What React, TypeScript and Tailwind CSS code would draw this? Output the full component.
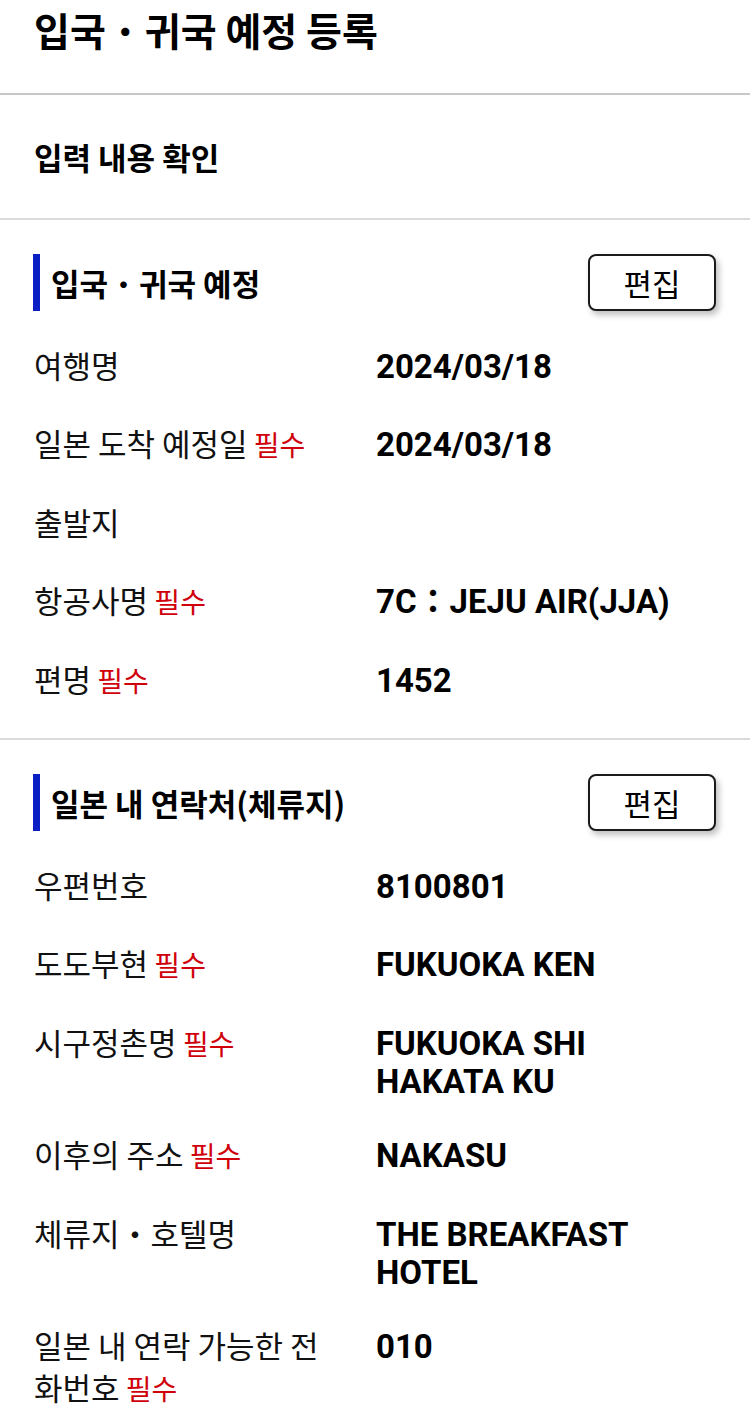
import React from "react";

const KR = "font-['Noto_Sans_CJK_KR','Noto_Sans',sans-serif]";
const VAL = "font-['Roboto','Noto_Sans_CJK_KR',sans-serif]";

type Row = { label: React.ReactNode; required?: boolean; value: React.ReactNode };

function Req() {
  return <span className="text-[#d0000b] text-[28px]"> 필수</span>;
}

function Dot() {
  return <span className="font-normal">・</span>;
}

function Section({ title, rows, last }: { title: React.ReactNode; rows: Row[]; last?: boolean }) {
  return (
    <section className={`pt-[34px] ${last ? "" : "pb-[19px] border-b-2 border-[#dadada]"}`}>
      <div className="flex items-center justify-between pl-[33px] pr-[34px] h-[57px]">
        <div className="flex items-center h-full">
          <div className="w-[7px] h-full bg-[#0a1fc4]" />
          <h3 className={`${KR} ml-[11px] text-[31px] font-bold leading-[42px] text-black`}>{title}</h3>
        </div>
        <button className={`${KR} w-[128px] h-[57px] rounded-[8px] border-2 border-[#1a1a1a] bg-white text-[31px] leading-[42px] text-black shadow-[3px_4px_6px_rgba(0,0,0,0.25)]`}>
          편집
        </button>
      </div>
      <div className="mt-[15px]">
        {rows.map((r, i) => (
          <div key={i} className="flex items-start py-[18px] pl-[34px] pr-[34px]">
            <div className={`${KR} w-[342px] shrink-0 pr-[36px] text-[31px] leading-[42px] text-[#111]`}>
              {r.label}
              {r.required && <Req />}
            </div>
            <div className={`${VAL} flex-1 mt-[4px] -mb-[4px] text-[33px] font-bold leading-[38px] text-black`}>{r.value}</div>
          </div>
        ))}
      </div>
    </section>
  );
}

export default function App() {
  const s1: Row[] = [
    { label: "여행명", value: "2024/03/18" },
    { label: "일본 도착 예정일", required: true, value: "2024/03/18" },
    { label: "출발지", value: "" },
    { label: "항공사명", required: true, value: "7C：JEJU AIR(JJA)" },
    { label: "편명", required: true, value: "1452" },
  ];
  const s2: Row[] = [
    { label: "우편번호", value: "8100801" },
    { label: "도도부현", required: true, value: "FUKUOKA KEN" },
    {
      label: "시구정촌명",
      required: true,
      value: (
        <>
          FUKUOKA SHI
          <br />
          HAKATA KU
        </>
      ),
    },
    { label: "이후의 주소", required: true, value: "NAKASU" },
    {
      label: (
        <>
          체류지<Dot />호텔명
        </>
      ),
      value: (
        <>
          THE BREAKFAST
          <br />
          HOTEL
        </>
      ),
    },
    { label: "일본 내 연락 가능한 전화번호", required: true, value: "010" },
  ];
  return (
    <div className="w-[750px] min-h-[1422px] bg-white overflow-hidden">
      <header className="pt-[3px] pb-[38px] px-[34px] border-b-2 border-[#c8c8c8]">
        <h1 className={`${KR} text-[39px] font-bold leading-[52px] text-black whitespace-nowrap`}>
          입국<Dot />귀국 예정 등록
        </h1>
      </header>
      <div className="h-[125px] flex items-center px-[34px] border-b-2 border-[#dadada]">
        <h2 className={`${KR} text-[31px] font-bold leading-[42px] text-black`}>입력 내용 확인</h2>
      </div>
      <Section
        title={
          <>
            입국<Dot />귀국 예정
          </>
        }
        rows={s1}
      />
      <Section title="일본 내 연락처(체류지)" rows={s2} last />
    </div>
  );
}
